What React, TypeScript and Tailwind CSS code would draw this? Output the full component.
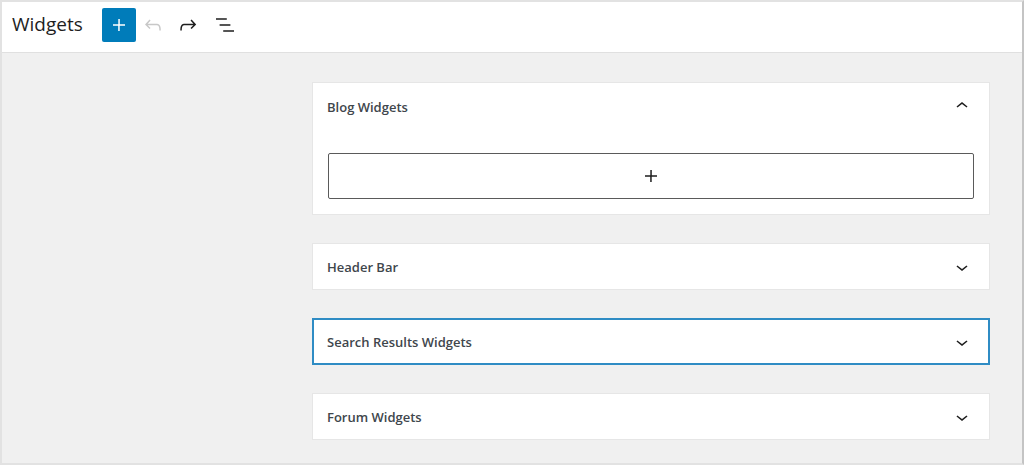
import React from 'react';

const Plus = ({ className = '' }: { className?: string }) => (
  <svg viewBox="0 0 24 24" className={className} fill="currentColor">
    <path d="M18 11.2h-5.2V6h-1.5v5.2H6v1.5h5.2V18h1.5v-5.2H18z" />
  </svg>
);

const Undo = () => (
  <svg viewBox="0 0 24 24" className="w-6 h-6" fill="currentColor">
    <path d="M18.3 11.7c-.6-.6-1.4-.9-2.3-.9H6.7l2.9-3.3-1.1-1-4.5 5L8.5 16l1-1-2.7-2.7H16c.5 0 .9.2 1.3.5 1 1 1 3.4 1 4.5v.3h1.5v-.2c0-1.5 0-4.3-1.5-5.7z" />
  </svg>
);

const Redo = () => (
  <svg viewBox="0 0 24 24" className="w-6 h-6" fill="currentColor">
    <path d="M15.6 6.5l-1.1 1 2.9 3.3H8c-.9 0-1.7.3-2.3.9-1.4 1.5-1.4 4.2-1.4 5.6v.2h1.5v-.3c0-1.1 0-3.5 1-4.5.3-.3.7-.5 1.3-.5h9.2L14.5 15l1.1 1.1 4.6-4.6-4.6-5z" />
  </svg>
);

const ListView = () => (
  <svg viewBox="0 0 24 24" className="w-6 h-6" fill="currentColor">
    <path d="M13.8 5.2H3v1.5h10.8V5.2zm-3.6 12v1.5H21v-1.5H10.2zm7.2-6H6.6v1.5h10.8v-1.5z" />
  </svg>
);

const Chevron = ({ up }: { up?: boolean }) => (
  <svg viewBox="0 0 24 24" className="w-6 h-6" fill="currentColor">
    {up ? (
      <path d="M6.5 12.4L12 8l5.5 4.4-.9 1.2L12 10l-4.5 3.6-1-1.2z" />
    ) : (
      <path d="M17.5 11.6L12 16l-5.5-4.4.9-1.2L12 14l4.5-3.6 1 1.2z" />
    )}
  </svg>
);

function Area({ title, open, focused }: { title: string; open?: boolean; focused?: boolean }) {
  return (
    <div
      className={`bg-white ${focused ? 'border-2 border-[#2f8cc4]' : 'border border-[#e6e6e6]'}`}
    >
      <div
        className={`flex items-center justify-between ${
          focused ? 'h-[43px] pl-[13px] pr-[14px]' : open ? 'h-[46px] pl-[14px] pr-[15px]' : 'h-[45px] pl-[14px] pr-[15px]'
        }`}
      >
        <span className="mt-[3px] text-[13px] font-semibold text-[#40464c]">{title}</span>
        <span className="text-[#1e1e1e]">
          <Chevron up={open} />
        </span>
      </div>
      {open && (
        <div className="px-[15px] pt-[24px] pb-[15px]">
          <div className="h-[46px] border border-[#5a5a5a] rounded-[2px] flex items-center justify-center text-[#1e1e1e]">
            <Plus className="w-6 h-6" />
          </div>
        </div>
      )}
    </div>
  );
}

export default function App() {
  return (
    <div
      className="w-[1024px] h-[465px] overflow-hidden border-2 border-[#e2e2e2] border-r-[#c4c4c4] bg-[#f0f0f0] flex flex-col"
      style={{ fontFamily: '"Open Sans", "Noto Sans", sans-serif' }}
    >
      <header className="h-[51px] shrink-0 bg-white border-b border-[#e0e0e0] flex items-center pl-[10px] pb-[4px]">
        <h1 className="text-[19px] text-[#1e1e1e] mr-[19px] -mt-[2px]">Widgets</h1>
        <button className="w-[34px] h-[34px] bg-[#007cba] rounded-[2px] flex items-center justify-center text-white">
          <Plus className="w-6 h-6" />
        </button>
        <span className="w-[34px] flex justify-center text-[#c8c8c8]">
          <Undo />
        </span>
        <span className="ml-[1px] w-[34px] flex justify-center text-[#1e1e1e]">
          <Redo />
        </span>
        <span className="ml-[3px] w-[34px] flex justify-center text-[#1e1e1e]">
          <ListView />
        </span>
      </header>
      <main className="pl-[310px] pt-[29px]">
        <div className="w-[678px] flex flex-col gap-[28px]">
          <Area title="Blog Widgets" open />
          <Area title="Header Bar" />
          <Area title="Search Results Widgets" focused />
          <Area title="Forum Widgets" />
        </div>
      </main>
    </div>
  );
}
